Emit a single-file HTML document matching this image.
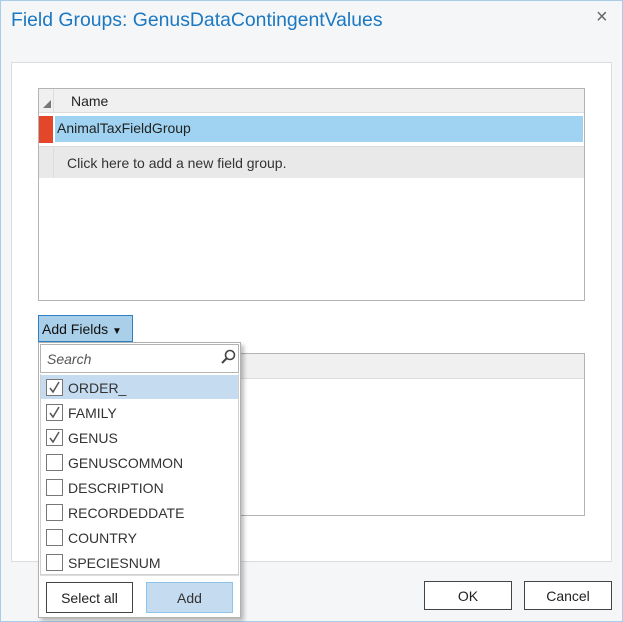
<!DOCTYPE html>
<html><head><style>
*{box-sizing:border-box;margin:0;padding:0}
body{width:623px;height:622px;background:#f5f6f7;font-family:"Liberation Sans",sans-serif;position:relative;overflow:hidden;}
.a{position:absolute}
.t{font-size:14px;color:#222}
</style></head><body>
<div class="a" style="left:0;top:0;width:623px;height:622px;border:1px solid #a8cde8"></div>
<div class="a" style="left:11px;top:9px;font-size:19.4px;color:#1b78c2">Field Groups: GenusDataContingentValues</div>
<div class="a" style="left:596px;top:6px;font-size:20px;color:#666">×</div>
<div class="a" style="left:11px;top:62px;width:601px;height:500px;background:#fff;border:1px solid #dcdcdc"></div>
<div class="a" style="left:38px;top:88px;width:547px;height:213px;border:1px solid #b4b4b4;background:#fff"></div>
<div class="a" style="left:39px;top:89px;width:545px;height:24px;background:#f0f0f0;border-bottom:1px solid #ddd"></div>
<div class="a" style="left:53px;top:89px;width:1px;height:24px;background:#ddd"></div>
<svg class="a" style="left:42px;top:99px" width="10" height="10"><path d="M9 1L9 9L1 9Z" fill="#777"/></svg>
<div class="a t" style="left:71px;top:93px">Name</div>
<div class="a" style="left:39px;top:116px;width:14px;height:27px;background:#e4462a"></div>
<div class="a" style="left:55px;top:116px;width:528px;height:26px;background:#9fd3f1"></div>
<div class="a t" style="left:57px;top:120px">AnimalTaxFieldGroup</div>
<div class="a" style="left:39px;top:146px;width:545px;height:32px;background:#e9e9e9;border-top:1px solid #ddd"></div>
<div class="a" style="left:53px;top:147px;width:1px;height:31px;background:#ddd"></div>
<div class="a t" style="left:67px;top:155px;color:#333">Click here to add a new field group.</div>
<div class="a" style="left:38px;top:353px;width:547px;height:163px;border:1px solid #b4b4b4;background:#fff"></div>
<div class="a" style="left:39px;top:354px;width:545px;height:25px;background:#f0f0f0;border-bottom:1px solid #ddd"></div>
<div class="a t" style="left:38px;top:315px;width:95px;height:27px;background:#a9cfe9;border:1px solid #2f7fc4;padding:5px 0 0 3px;color:#111">Add Fields <span style="font-size:10px">▼</span></div>
<div class="a" style="left:38px;top:342px;width:203px;height:276px;background:#fff;border:1px solid #b0b0b0;box-shadow:3px 3px 4px rgba(0,0,0,.25)"></div>
<div class="a" style="left:40px;top:344px;width:199px;height:29px;border:1px solid #b4b4b4;background:#fff"></div>
<div class="a" style="left:47px;top:351px;font-size:14px;font-style:italic;color:#555">Search</div>
<svg class="a" style="left:220px;top:349px" width="16" height="16"><circle cx="10" cy="6" r="4.5" stroke="#444" stroke-width="1.6" fill="none"/><path d="M7 9L2 14" stroke="#444" stroke-width="2"/></svg>
<div class="a" style="left:40px;top:374px;width:199px;height:201px;border:1px solid #d0d0d0;border-top:none"></div>
<div class="a" style="left:41px;top:375px;width:197px;height:24px;background:#c5dcf0"></div>
<div class="a" style="left:40px;top:575px;width:199px;height:1px;background:#ddd"></div>
<div id="list"></div>
<div class="a t" style="left:46px;top:582px;width:87px;height:31px;border:1px solid #444;background:#fff;text-align:center;padding-top:7px">Select all</div>
<div class="a t" style="left:146px;top:582px;width:87px;height:31px;border:1px solid #8ec3ea;background:#c5dcf0;text-align:center;padding-top:7px;color:#333">Add</div>
<div class="a t" style="left:424px;top:581px;width:88px;height:29px;border:1px solid #444;background:#fff;text-align:center;padding-top:6px">OK</div>
<div class="a t" style="left:524px;top:581px;width:88px;height:29px;border:1px solid #444;background:#fff;text-align:center;padding-top:6px">Cancel</div>
<script>
var n=["ORDER_","FAMILY","GENUS","GENUSCOMMON","DESCRIPTION","RECORDEDDATE","COUNTRY","SPECIESNUM"],h="";
n.forEach(function(s,i){var y=379+i*25;h+='<div class="a" style="left:46px;top:'+y+'px;width:17px;height:17px;border:1px solid #777;background:#fff"></div>';
if(i<3)h+='<svg class="a" style="left:48px;top:'+(y+2)+'px" width="13" height="13"><path d="M2 7L5 11L11 1" stroke="#555" stroke-width="1.5" fill="none"/></svg>';
h+='<div class="a t" style="left:68px;top:'+(y+1)+'px;color:#333">'+s+'</div>';});
document.getElementById("list").outerHTML=h;
</script>
</body></html>
